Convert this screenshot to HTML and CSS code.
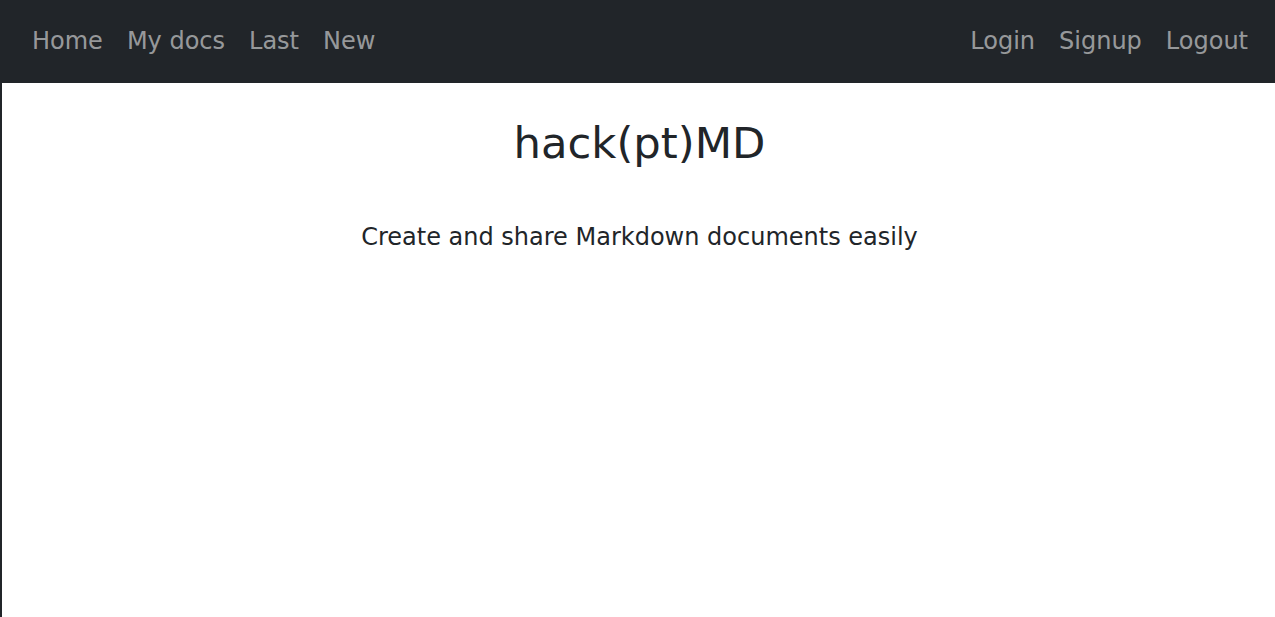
FILE: index.html
```html
<!DOCTYPE html>
<html lang="en">
<head>
<meta charset="utf-8">
<title>hack(pt)MD</title>
<link rel="stylesheet" href="styles.css">
</head>
<body>
<nav class="navbar">
  <ul class="nav-group">
    <li><a class="nav-link" href="#">Home</a></li>
    <li><a class="nav-link" href="#">My docs</a></li>
    <li><a class="nav-link" href="#">Last</a></li>
    <li><a class="nav-link" href="#">New</a></li>
  </ul>
  <ul class="nav-group">
    <li><a class="nav-link" href="#">Login</a></li>
    <li><a class="nav-link" href="#">Signup</a></li>
    <li><a class="nav-link" href="#">Logout</a></li>
  </ul>
</nav>
<main class="hero">
  <h1 class="title">hack(pt)MD</h1>
  <p class="subtitle">Create and share Markdown documents easily</p>
</main>
</body>
</html>
```
FILE: styles.css
```css
html, body {
  height: 100%;
}
body {
  margin: 0;
  box-sizing: border-box;
  border-left: 2px solid #212529;
  font-family: "DejaVu Sans", sans-serif;
  color: #212529;
  background: #fff;
}
.navbar {
  display: flex;
  justify-content: space-between;
  align-items: center;
  height: 83px;
  box-sizing: border-box;
  background: #212529;
  padding: 0 15px 2px 18px;
}
.nav-group {
  display: flex;
  list-style: none;
  margin: 0;
  padding: 0;
}
.nav-link {
  display: block;
  padding: 8px 12px;
  font-size: 24px;
  line-height: 36px;
  color: rgba(255, 255, 255, 0.55);
  text-decoration: none;
}
.hero {
  text-align: center;
  padding: 35px 0 0 2px;
}
.title {
  margin: 0;
  font-size: 43.3px;
  font-weight: 400;
  line-height: 1.2;
}
.subtitle {
  margin: 49px 0 0;
  font-size: 24px;
  line-height: 36px;
}
```
